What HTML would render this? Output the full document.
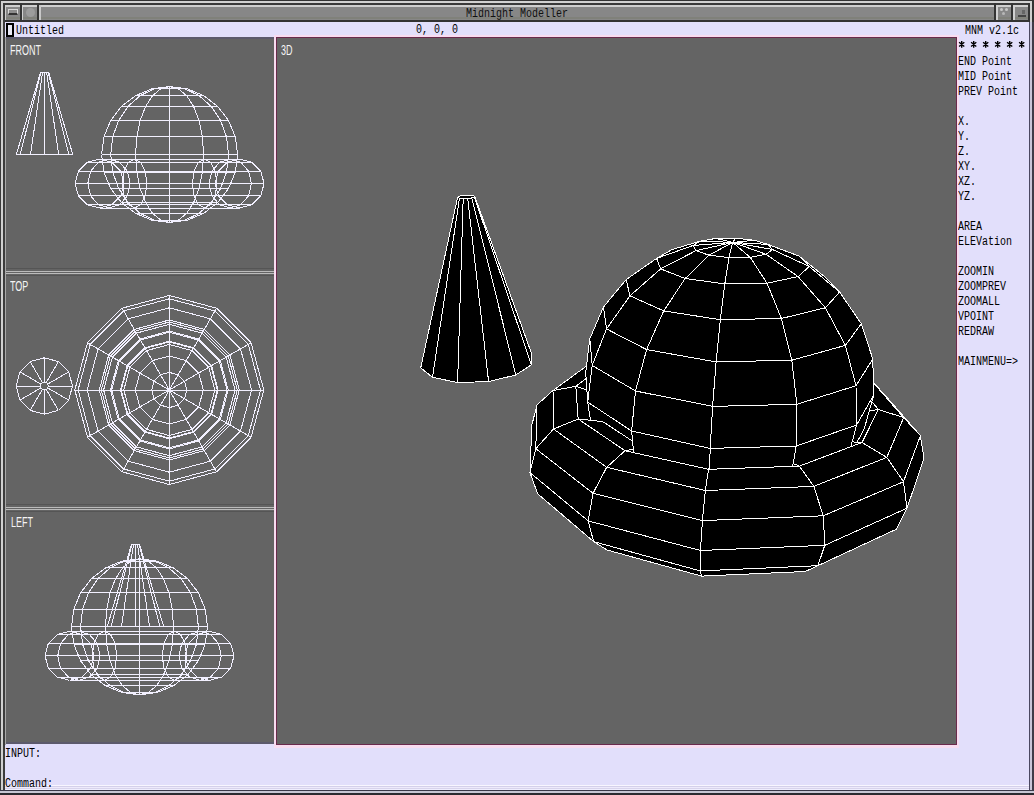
<!DOCTYPE html>
<html><head><meta charset="utf-8">
<style>
*{margin:0;padding:0;box-sizing:border-box}
html,body{width:1034px;height:795px;overflow:hidden;background:#e2dffb}
body{position:relative;font-family:"Liberation Mono",monospace}
.a{position:absolute}
.t{position:absolute;font-family:"Liberation Mono",monospace;font-size:12px;line-height:15px;color:#000;white-space:pre;transform:scaleX(0.8333);transform-origin:0 0}
.vl{position:absolute;font-family:"Liberation Sans",sans-serif;font-size:15px;line-height:15px;color:#f4f4f4;white-space:pre;transform:scaleX(0.6);transform-origin:0 0}
svg{position:absolute;overflow:hidden}
</style></head><body>
<!-- window frame -->
<div class="a" style="left:0;top:0;width:1034px;height:795px;background:#3a3a3a"></div>
<div class="a" style="left:1px;top:1px;width:1032px;height:793px;background:#d0d0d0"></div>
<div class="a" style="left:3px;top:3px;width:1029px;height:790px;background:#3c3c3c"></div>
<div class="a" style="left:5px;top:5px;width:1026px;height:787px;background:#b8b8b8"></div>
<!-- title bar -->
<div class="a" style="left:0;top:0;width:1034px;height:1px;background:#333"></div>
<div class="a" style="left:1px;top:1px;width:1032px;height:2px;background:#d2d2d2"></div>
<div class="a" style="left:3px;top:3px;width:1028px;height:2px;background:#3a3a3a"></div>
<div class="a" style="left:5px;top:5px;width:1024px;height:2px;background:#cfcfcf"></div>
<div class="a" style="left:5px;top:7px;width:1024px;height:13px;background:#878787"></div>
<div class="a" style="left:5px;top:17px;width:1024px;height:2px;background:#80817a"></div>
<div class="a" style="left:0;top:20px;width:1034px;height:2px;background:#333"></div>
<div class="a" style="left:20px;top:3px;width:2px;height:17px;background:#333"></div>
<div class="a" style="left:22px;top:5px;width:1px;height:15px;background:#d0d0d0"></div>
<div class="a" style="left:37px;top:3px;width:2px;height:17px;background:#333"></div>
<div class="a" style="left:39px;top:5px;width:2px;height:15px;background:#c8c8c8"></div>
<div class="a" style="left:994px;top:3px;width:2px;height:17px;background:#333"></div>
<div class="a" style="left:996px;top:5px;width:2px;height:15px;background:#d0d0d0"></div>
<div class="a" style="left:1011px;top:3px;width:2px;height:17px;background:#333"></div>
<div class="a" style="left:1013px;top:5px;width:2px;height:15px;background:#d0d0d0"></div>
<div class="a" style="left:1028px;top:3px;width:2px;height:17px;background:#333"></div>
<div class="a" style="left:1030px;top:1px;width:2px;height:21px;background:#d0d0d0"></div>
<div class="a" style="left:1032px;top:0;width:2px;height:22px;background:#333"></div>
<div class="a" style="left:1px;top:1px;width:2px;height:21px;background:#d0d0d0"></div>
<div class="a" style="left:3px;top:3px;width:2px;height:19px;background:#3a3a3a"></div>
<div class="a" style="left:5px;top:5px;width:1px;height:15px;background:#cfcfcf"></div>
<div class="a" style="left:8px;top:9px;width:10px;height:6px;border:1px solid #d8d8d8;border-bottom:2px solid #333;background:#8c8c8c"></div>
<div class="a" style="left:26px;top:8px;width:9px;height:9px;border-radius:5px;background:#9c9c9c"></div>
<div class="a" style="left:1000px;top:8px;width:3px;height:3px;border-radius:2px;background:#c8c8c8"></div>
<div class="a" style="left:1005px;top:8px;width:3px;height:3px;border-radius:2px;background:#c8c8c8"></div>
<div class="a" style="left:1002px;top:12px;width:3px;height:3px;border-radius:2px;background:#b8b8b8"></div>
<div class="a" style="left:1018px;top:15px;width:8px;height:2px;background:#444"></div>
<div class="a" style="left:1022px;top:10px;width:3px;height:4px;background:#666"></div>
<div class="t" style="left:466px;top:7px;color:#111">Midnight Modeller</div>
<!-- lavender client area -->
<div class="a" style="left:5px;top:22px;width:1024px;height:768px;background:#e2dffb"></div>
<div class="a" style="left:1029px;top:22px;width:1px;height:768px;background:#4a4860"></div>
<div class="a" style="left:1030px;top:22px;width:2px;height:768px;background:#c8c5d8"></div>
<div class="a" style="left:1032px;top:22px;width:2px;height:773px;background:#3e3b48"></div>
<div class="a" style="left:5px;top:785px;width:1024px;height:1px;background:#f8f6ff"></div>
<div class="a" style="left:5px;top:786px;width:1024px;height:1px;background:#d4d0ea"></div>
<div class="a" style="left:5px;top:787px;width:1024px;height:1px;background:#eeeafc"></div>
<div class="a" style="left:5px;top:788px;width:1024px;height:1px;background:#d8d4ec"></div>
<div class="a" style="left:5px;top:789px;width:1024px;height:1px;background:#f0eeff"></div>
<div class="a" style="left:0;top:790px;width:1034px;height:1px;background:#3a3848"></div>
<div class="a" style="left:0;top:791px;width:1034px;height:2px;background:#c8c6d4"></div>
<div class="a" style="left:0;top:793px;width:1034px;height:2px;background:#2c2a30"></div>
<!-- top info line -->
<div class="a" style="left:6px;top:23px;width:8px;height:14px;border:2px solid #000;background:#e8e8f4"></div>
<div class="t" style="left:16px;top:24px">Untitled</div>
<div class="t" style="left:416px;top:23px">0, 0, 0</div>
<!-- left viewports -->
<div class="a" style="left:5px;top:37px;width:269px;height:707px;background:#646464"></div>
<div class="a" style="left:5px;top:37px;width:1px;height:708px;background:#a8a8a8"></div>
<div class="a" style="left:6px;top:37px;width:268px;height:2px;background:#5c5a6c"></div>
<div class="a" style="left:6px;top:742px;width:268px;height:2px;background:#5c5a6c"></div>
<div class="a" style="left:6px;top:268px;width:268px;height:1px;background:#555"></div>
<div class="a" style="left:6px;top:271px;width:268px;height:1px;background:#bbb"></div>
<div class="a" style="left:6px;top:273px;width:268px;height:1px;background:#bbb"></div>
<div class="a" style="left:6px;top:275px;width:268px;height:1px;background:#555"></div>
<div class="a" style="left:6px;top:504px;width:268px;height:1px;background:#555"></div>
<div class="a" style="left:6px;top:507px;width:268px;height:1px;background:#bbb"></div>
<div class="a" style="left:6px;top:509px;width:268px;height:1px;background:#bbb"></div>
<div class="a" style="left:6px;top:511px;width:268px;height:1px;background:#555"></div>
<svg style="left:6px;top:38px" width="268" height="230"><g stroke="#f2f0ff" stroke-width="1" fill="none" shape-rendering="crispEdges"><path d="M181.2 50.8L178.8 50.8M178.8 50.8L163.6 48.5M163.6 48.5L181.2 50.8M178.8 50.8L172.4 50.8M172.4 50.8L163.6 48.5M172.4 50.8L163.6 50.8M163.6 50.8L163.6 48.5M163.6 50.8L154.8 50.8M154.8 50.8L163.6 48.5M154.8 50.8L148.4 50.8M148.4 50.8L163.6 48.5M148.4 50.8L146 50.8M146 50.8L163.6 48.5M197.6 57.6L193 57.6M193 57.6L178.8 50.8M181.2 50.8L197.6 57.6M193 57.6L180.6 57.6M180.6 57.6L172.4 50.8M180.6 57.6L163.6 57.6M163.6 57.6L163.6 50.8M163.6 57.6L146.6 57.6M146.6 57.6L154.8 50.8M146.6 57.6L134.2 57.6M134.2 57.6L148.4 50.8M134.2 57.6L129.6 57.6M129.6 57.6L146 50.8M211.7 68.4L205.2 68.4M205.2 68.4L193 57.6M197.6 57.6L211.7 68.4M205.2 68.4L187.6 68.4M187.6 68.4L180.6 57.6M187.6 68.4L163.6 68.4M163.6 68.4L163.6 57.6M163.6 68.4L139.6 68.4M139.6 68.4L146.6 57.6M139.6 68.4L122 68.4M122 68.4L134.2 57.6M122 68.4L115.5 68.4M115.5 68.4L129.6 57.6M222.5 82.5L214.6 82.5M214.6 82.5L205.2 68.4M211.7 68.4L222.5 82.5M214.6 82.5L193 82.5M193 82.5L187.6 68.4M193 82.5L163.6 82.5M163.6 82.5L163.6 68.4M163.6 82.5L134.2 82.5M134.2 82.5L139.6 68.4M134.2 82.5L112.6 82.5M112.6 82.5L122 68.4M112.6 82.5L104.7 82.5M104.7 82.5L115.5 68.4M229.3 98.9L220.5 98.9M220.5 98.9L214.6 82.5M222.5 82.5L229.3 98.9M220.5 98.9L196.4 98.9M196.4 98.9L193 82.5M196.4 98.9L163.6 98.9M163.6 98.9L163.6 82.5M163.6 98.9L130.8 98.9M130.8 98.9L134.2 82.5M130.8 98.9L106.7 98.9M106.7 98.9L112.6 82.5M106.7 98.9L97.9 98.9M97.9 98.9L104.7 82.5M231.6 116.5L222.5 116.5M222.5 116.5L220.5 98.9M229.3 98.9L231.6 116.5M222.5 116.5L197.6 116.5M197.6 116.5L196.4 98.9M197.6 116.5L163.6 116.5M163.6 116.5L163.6 98.9M163.6 116.5L129.6 116.5M129.6 116.5L130.8 98.9M129.6 116.5L104.7 116.5M104.7 116.5L106.7 98.9M104.7 116.5L95.6 116.5M95.6 116.5L97.9 98.9M229.3 134.1L220.5 134.1M220.5 134.1L222.5 116.5M231.6 116.5L229.3 134.1M220.5 134.1L196.4 134.1M196.4 134.1L197.6 116.5M196.4 134.1L163.6 134.1M163.6 134.1L163.6 116.5M163.6 134.1L130.8 134.1M130.8 134.1L129.6 116.5M130.8 134.1L106.7 134.1M106.7 134.1L104.7 116.5M106.7 134.1L97.9 134.1M97.9 134.1L95.6 116.5M222.5 150.5L214.6 150.5M214.6 150.5L220.5 134.1M229.3 134.1L222.5 150.5M214.6 150.5L193 150.5M193 150.5L196.4 134.1M193 150.5L163.6 150.5M163.6 150.5L163.6 134.1M163.6 150.5L134.2 150.5M134.2 150.5L130.8 134.1M134.2 150.5L112.6 150.5M112.6 150.5L106.7 134.1M112.6 150.5L104.7 150.5M104.7 150.5L97.9 134.1M211.7 164.6L205.2 164.6M205.2 164.6L214.6 150.5M222.5 150.5L211.7 164.6M205.2 164.6L187.6 164.6M187.6 164.6L193 150.5M187.6 164.6L163.6 164.6M163.6 164.6L163.6 150.5M163.6 164.6L139.6 164.6M139.6 164.6L134.2 150.5M139.6 164.6L122 164.6M122 164.6L112.6 150.5M122 164.6L115.5 164.6M115.5 164.6L104.7 150.5M197.6 175.4L193 175.4M193 175.4L205.2 164.6M211.7 164.6L197.6 175.4M193 175.4L180.6 175.4M180.6 175.4L187.6 164.6M180.6 175.4L163.6 175.4M163.6 175.4L163.6 164.6M163.6 175.4L146.6 175.4M146.6 175.4L139.6 164.6M146.6 175.4L134.2 175.4M134.2 175.4L122 164.6M134.2 175.4L129.6 175.4M129.6 175.4L115.5 164.6M181.2 182.2L178.8 182.2M178.8 182.2L193 175.4M197.6 175.4L181.2 182.2M178.8 182.2L172.4 182.2M172.4 182.2L180.6 175.4M172.4 182.2L163.6 182.2M163.6 182.2L163.6 175.4M163.6 182.2L154.8 182.2M154.8 182.2L146.6 175.4M154.8 182.2L148.4 182.2M148.4 182.2L134.2 175.4M148.4 182.2L146 182.2M146 182.2L129.6 175.4M163.6 184.5L178.8 182.2M181.2 182.2L163.6 184.5M163.6 184.5L172.4 182.2M163.6 184.5L163.6 182.2M163.6 184.5L154.8 182.2M163.6 184.5L148.4 182.2M163.6 184.5L146 182.2M245.4 145.5L242.6 133.2M242.6 133.2L254.8 133.2M254.8 133.2L258.1 145.5M258.1 145.5L245.4 145.5M242.6 133.2L234.8 124.3M234.8 124.3L245.8 124.3M245.8 124.3L254.8 133.2M234.8 124.3L224.2 121M224.2 121L233.6 121M233.6 121L245.8 124.3M224.2 121L213.6 124.3M213.6 124.3L221.4 124.3M221.4 124.3L233.6 121M213.6 124.3L205.8 133.2M205.8 133.2L212.4 133.2M212.4 133.2L221.4 124.3M205.8 133.2L203 145.5M203 145.5L209.1 145.5M209.1 145.5L212.4 133.2M203 145.5L205.8 157.8M205.8 157.8L212.4 157.8M212.4 157.8L209.1 145.5M205.8 157.8L213.6 166.7M213.6 166.7L221.3 166.7M221.3 166.7L212.4 157.8M213.6 166.7L224.2 170M224.2 170L233.6 170M233.6 170L221.3 166.7M224.2 170L234.8 166.7M234.8 166.7L245.8 166.7M245.8 166.7L233.6 170M234.8 166.7L242.6 157.8M242.6 157.8L254.8 157.8M254.8 157.8L245.8 166.7M242.6 157.8L245.4 145.5M258.1 145.5L254.8 157.8M210.8 145.5L209.2 133.2M209.2 133.2L242.6 133.2M245.4 145.5L210.8 145.5M209.2 133.2L204.7 124.3M204.7 124.3L234.8 124.3M204.7 124.3L198.6 121M198.6 121L224.2 121M198.6 121L192.5 124.3M192.5 124.3L213.6 124.3M192.5 124.3L188 133.2M188 133.2L205.8 133.2M188 133.2L186.4 145.5M186.4 145.5L203 145.5M186.4 145.5L188 157.8M188 157.8L205.8 157.8M188 157.8L192.5 166.7M192.5 166.7L213.6 166.7M192.5 166.7L198.6 170M198.6 170L224.2 170M198.6 170L204.7 166.7M204.7 166.7L234.8 166.7M204.7 166.7L209.2 157.8M209.2 157.8L242.6 157.8M209.2 157.8L210.8 145.5M163.6 145.5L163.6 133.2M163.6 133.2L209.2 133.2M210.8 145.5L163.6 145.5M163.6 133.2L163.6 124.3M163.6 124.3L204.7 124.3M163.6 124.3L163.6 121M163.6 121L198.6 121M163.6 124.3L192.5 124.3M163.6 133.2L188 133.2M163.6 145.5L186.4 145.5M163.6 145.5L163.6 157.8M163.6 157.8L188 157.8M163.6 157.8L163.6 166.7M163.6 166.7L192.5 166.7M163.6 166.7L163.6 170M163.6 170L198.6 170M163.6 166.7L204.7 166.7M163.6 157.8L209.2 157.8M116.4 145.5L118 133.2M118 133.2L163.6 133.2M163.6 145.5L116.4 145.5M118 133.2L122.5 124.3M122.5 124.3L163.6 124.3M122.5 124.3L128.6 121M128.6 121L163.6 121M128.6 121L134.7 124.3M134.7 124.3L163.6 124.3M134.7 124.3L139.2 133.2M139.2 133.2L163.6 133.2M139.2 133.2L140.8 145.5M140.8 145.5L163.6 145.5M140.8 145.5L139.2 157.8M139.2 157.8L163.6 157.8M139.2 157.8L134.7 166.7M134.7 166.7L163.6 166.7M134.7 166.7L128.6 170M128.6 170L163.6 170M128.6 170L122.5 166.7M122.5 166.7L163.6 166.7M122.5 166.7L118 157.8M118 157.8L163.6 157.8M118 157.8L116.4 145.5M81.8 145.5L84.6 133.2M84.6 133.2L118 133.2M116.4 145.5L81.8 145.5M84.6 133.2L92.4 124.3M92.4 124.3L122.5 124.3M92.4 124.3L103 121M103 121L128.6 121M103 121L113.6 124.3M113.6 124.3L134.7 124.3M113.6 124.3L121.4 133.2M121.4 133.2L139.2 133.2M121.4 133.2L124.2 145.5M124.2 145.5L140.8 145.5M124.2 145.5L121.4 157.8M121.4 157.8L139.2 157.8M121.4 157.8L113.6 166.7M113.6 166.7L134.7 166.7M113.6 166.7L103 170M103 170L128.6 170M103 170L92.4 166.7M92.4 166.7L122.5 166.7M92.4 166.7L84.6 157.8M84.6 157.8L118 157.8M84.6 157.8L81.8 145.5M69.1 145.5L72.4 133.2M72.4 133.2L84.6 133.2M81.8 145.5L69.1 145.5M72.4 133.2L81.4 124.3M81.4 124.3L92.4 124.3M81.4 124.3L93.6 121M93.6 121L103 121M93.6 121L105.8 124.3M105.8 124.3L113.6 124.3M105.8 124.3L114.8 133.2M114.8 133.2L121.4 133.2M114.8 133.2L118.1 145.5M118.1 145.5L124.2 145.5M118.1 145.5L114.8 157.8M114.8 157.8L121.4 157.8M114.8 157.8L105.8 166.7M105.8 166.7L113.6 166.7M105.8 166.7L93.6 170M93.6 170L103 170M93.6 170L81.4 166.7M81.4 166.7L92.4 166.7M81.4 166.7L72.4 157.8M72.4 157.8L84.6 157.8M72.4 157.8L69.1 145.5M116.3 145.5L118 133.2M81.8 145.5L116.3 145.5M118 157.8L116.3 145.5M116.3 145.5L163.6 145.5M66.8 116.5L63 116.5M63 116.5L42.1 34M42.1 34L42.6 34M42.6 34L66.8 116.5M63 116.5L52.7 116.5M52.7 116.5L40.6 34M40.6 34L42.1 34M52.7 116.5L38.6 116.5M38.6 116.5L38.6 34M38.6 34L40.6 34M38.6 116.5L24.5 116.5M24.5 116.5L36.6 34M36.6 34L38.6 34M24.5 116.5L14.2 116.5M14.2 116.5L35.1 34M35.1 34L36.6 34M14.2 116.5L10.4 116.5M10.4 116.5L34.6 34M34.6 34L35.1 34"/></g></svg>
<svg style="left:6px;top:276px" width="268" height="228"><g stroke="#f2f0ff" stroke-width="1" fill="none" shape-rendering="crispEdges"><path d="M180.9 114L178.5 105.2M178.5 105.2L163.3 114M163.3 114L180.9 114M178.5 105.2L172.1 98.8M172.1 98.8L163.3 114M172.1 98.8L163.3 96.4M163.3 96.4L163.3 114M163.3 96.4L154.5 98.8M154.5 98.8L163.3 114M154.5 98.8L148.1 105.2M148.1 105.2L163.3 114M148.1 105.2L145.7 114M145.7 114L163.3 114M145.7 114L148.1 122.8M148.1 122.8L163.3 114M148.1 122.8L154.5 129.2M154.5 129.2L163.3 114M154.5 129.2L163.3 131.6M163.3 131.6L163.3 114M163.3 131.6L172.1 129.2M172.1 129.2L163.3 114M172.1 129.2L178.5 122.8M178.5 122.8L163.3 114M178.5 122.8L180.9 114M197.3 114L192.7 97M192.7 97L178.5 105.2M180.9 114L197.3 114M192.7 97L180.3 84.6M180.3 84.6L172.1 98.8M180.3 84.6L163.3 80M163.3 80L163.3 96.4M163.3 80L146.3 84.6M146.3 84.6L154.5 98.8M146.3 84.6L133.9 97M133.9 97L148.1 105.2M133.9 97L129.3 114M129.3 114L145.7 114M129.3 114L133.9 131M133.9 131L148.1 122.8M133.9 131L146.3 143.4M146.3 143.4L154.5 129.2M146.3 143.4L163.3 148M163.3 148L163.3 131.6M163.3 148L180.3 143.4M180.3 143.4L172.1 129.2M180.3 143.4L192.7 131M192.7 131L178.5 122.8M192.7 131L197.3 114M211.4 114L204.9 90M204.9 90L192.7 97M197.3 114L211.4 114M204.9 90L187.3 72.4M187.3 72.4L180.3 84.6M187.3 72.4L163.3 65.9M163.3 65.9L163.3 80M163.3 65.9L139.3 72.4M139.3 72.4L146.3 84.6M139.3 72.4L121.7 90M121.7 90L133.9 97M121.7 90L115.2 114M115.2 114L129.3 114M115.2 114L121.7 138M121.7 138L133.9 131M121.7 138L139.3 155.6M139.3 155.6L146.3 143.4M139.3 155.6L163.3 162.1M163.3 162.1L163.3 148M163.3 162.1L187.3 155.6M187.3 155.6L180.3 143.4M187.3 155.6L204.9 138M204.9 138L192.7 131M204.9 138L211.4 114M222.2 114L214.3 84.6M214.3 84.6L204.9 90M211.4 114L222.2 114M214.3 84.6L192.7 63M192.7 63L187.3 72.4M192.7 63L163.3 55.1M163.3 55.1L163.3 65.9M163.3 55.1L133.9 63M133.9 63L139.3 72.4M133.9 63L112.3 84.6M112.3 84.6L121.7 90M112.3 84.6L104.4 114M104.4 114L115.2 114M104.4 114L112.3 143.4M112.3 143.4L121.7 138M112.3 143.4L133.9 165M133.9 165L139.3 155.6M133.9 165L163.3 172.9M163.3 172.9L163.3 162.1M163.3 172.9L192.7 165M192.7 165L187.3 155.6M192.7 165L214.3 143.4M214.3 143.4L204.9 138M214.3 143.4L222.2 114M229 114L220.2 81.2M220.2 81.2L214.3 84.6M222.2 114L229 114M220.2 81.2L196.1 57.1M196.1 57.1L192.7 63M196.1 57.1L163.3 48.3M163.3 48.3L163.3 55.1M163.3 48.3L130.5 57.1M130.5 57.1L133.9 63M130.5 57.1L106.4 81.2M106.4 81.2L112.3 84.6M106.4 81.2L97.6 114M97.6 114L104.4 114M97.6 114L106.4 146.8M106.4 146.8L112.3 143.4M106.4 146.8L130.5 170.9M130.5 170.9L133.9 165M130.5 170.9L163.3 179.7M163.3 179.7L163.3 172.9M163.3 179.7L196.1 170.9M196.1 170.9L192.7 165M196.1 170.9L220.2 146.8M220.2 146.8L214.3 143.4M220.2 146.8L229 114M231.3 114L222.2 80M222.2 80L220.2 81.2M229 114L231.3 114M222.2 80L197.3 55.1M197.3 55.1L196.1 57.1M197.3 55.1L163.3 46M163.3 46L163.3 48.3M163.3 46L129.3 55.1M129.3 55.1L130.5 57.1M129.3 55.1L104.4 80M104.4 80L106.4 81.2M104.4 80L95.3 114M95.3 114L97.6 114M95.3 114L104.4 148M104.4 148L106.4 146.8M104.4 148L129.3 172.9M129.3 172.9L130.5 170.9M129.3 172.9L163.3 182M163.3 182L163.3 179.7M163.3 182L197.3 172.9M197.3 172.9L196.1 170.9M197.3 172.9L222.2 148M222.2 148L220.2 146.8M222.2 148L231.3 114M245.1 66.8L242.3 68.4M242.3 68.4L254.5 114M254.5 114L257.8 114M257.8 114L245.1 66.8M242.3 68.4L234.5 72.9M234.5 72.9L245.6 114M245.6 114L254.5 114M234.5 72.9L223.9 79M223.9 79L233.3 114M233.3 114L245.6 114M223.9 79L213.3 85.1M213.3 85.1L221 114M221 114L233.3 114M213.3 85.1L205.5 89.6M205.5 89.6L212.1 114M212.1 114L221 114M205.5 89.6L202.7 91.2M202.7 91.2L208.8 114M208.8 114L212.1 114M210.6 32.2L208.9 35M208.9 35L242.3 68.4M245.1 66.8L210.6 32.2M208.9 35L204.4 42.8M204.4 42.8L234.5 72.9M204.4 42.8L198.3 53.4M198.3 53.4L223.9 79M198.3 53.4L192.2 64M192.2 64L213.3 85.1M192.2 64L187.7 71.8M187.7 71.8L205.5 89.6M187.7 71.8L186 74.6M186 74.6L202.7 91.2M163.3 19.5L163.3 22.8M163.3 22.8L208.9 35M210.6 32.2L163.3 19.5M163.3 22.8L163.3 31.8M163.3 31.8L204.4 42.8M163.3 31.8L163.3 44M163.3 44L198.3 53.4M163.3 44L163.3 56.2M163.3 56.2L192.2 64M163.3 56.2L163.3 65.2M163.3 65.2L187.7 71.8M163.3 65.2L163.3 68.5M163.3 68.5L186 74.6M116.1 32.2L117.7 35M117.7 35L163.3 22.8M163.3 19.5L116.1 32.2M117.7 35L122.2 42.8M122.2 42.8L163.3 31.8M122.2 42.8L128.3 53.4M128.3 53.4L163.3 44M128.3 53.4L134.4 64M134.4 64L163.3 56.2M134.4 64L138.9 71.8M138.9 71.8L163.3 65.2M138.9 71.8L140.6 74.6M140.6 74.6L163.3 68.5M81.5 66.8L84.3 68.4M84.3 68.4L117.7 35M116.1 32.2L81.5 66.8M84.3 68.4L92.1 72.9M92.1 72.9L122.2 42.8M92.1 72.9L102.7 79M102.7 79L128.3 53.4M102.7 79L113.3 85.1M113.3 85.1L134.4 64M113.3 85.1L121.1 89.6M121.1 89.6L138.9 71.8M121.1 89.6L123.9 91.2M123.9 91.2L140.6 74.6M68.8 114L72.1 114M72.1 114L84.3 68.4M81.5 66.8L68.8 114M72.1 114L81.1 114M81.1 114L92.1 72.9M81.1 114L93.3 114M93.3 114L102.7 79M93.3 114L105.6 114M105.6 114L113.3 85.1M105.6 114L114.5 114M114.5 114L121.1 89.6M114.5 114L117.8 114M117.8 114L123.9 91.2M81.5 161.2L84.3 159.6M84.3 159.6L72.1 114M68.8 114L81.5 161.2M84.3 159.6L92.1 155.1M92.1 155.1L81.1 114M92.1 155.1L102.7 149M102.7 149L93.3 114M102.7 149L113.3 142.9M113.3 142.9L105.6 114M113.3 142.9L121.1 138.4M121.1 138.4L114.5 114M121.1 138.4L123.9 136.8M123.9 136.8L117.8 114M116 195.8L117.7 193M117.7 193L84.3 159.6M81.5 161.2L116 195.8M117.7 193L122.2 185.2M122.2 185.2L92.1 155.1M122.2 185.2L128.3 174.6M128.3 174.6L102.7 149M128.3 174.6L134.4 164M134.4 164L113.3 142.9M134.4 164L138.9 156.2M138.9 156.2L121.1 138.4M138.9 156.2L140.5 153.4M140.5 153.4L123.9 136.8M163.3 208.5L163.3 205.2M163.3 205.2L117.7 193M116 195.8L163.3 208.5M163.3 205.2L163.3 196.2M163.3 196.2L122.2 185.2M163.3 196.2L163.3 184M163.3 184L128.3 174.6M163.3 184L163.3 171.8M163.3 171.8L134.4 164M163.3 171.8L163.3 162.8M163.3 162.8L138.9 156.2M163.3 162.8L163.3 159.5M163.3 159.5L140.5 153.4M210.6 195.8L208.9 193M208.9 193L163.3 205.2M163.3 208.5L210.6 195.8M208.9 193L204.4 185.2M204.4 185.2L163.3 196.2M204.4 185.2L198.3 174.6M198.3 174.6L163.3 184M198.3 174.6L192.2 164M192.2 164L163.3 171.8M192.2 164L187.7 156.2M187.7 156.2L163.3 162.8M187.7 156.2L186 153.4M186 153.4L163.3 159.5M245.1 161.3L242.3 159.6M242.3 159.6L208.9 193M210.6 195.8L245.1 161.3M242.3 159.6L234.5 155.1M234.5 155.1L204.4 185.2M234.5 155.1L223.9 149M223.9 149L198.3 174.6M223.9 149L213.3 142.9M213.3 142.9L192.2 164M213.3 142.9L205.5 138.4M205.5 138.4L187.7 156.2M205.5 138.4L202.7 136.8M202.7 136.8L186 153.4M254.5 114L242.3 159.6M245.1 161.3L257.8 114M245.6 114L234.5 155.1M233.3 114L223.9 149M221 114L213.3 142.9M212.1 114L205.5 138.4M208.8 114L202.7 136.8M66.5 110L62.7 95.9M62.7 95.9L41.8 108M41.8 108L42.3 110M42.3 110L66.5 110M62.7 95.9L52.4 85.6M52.4 85.6L40.3 106.5M40.3 106.5L41.8 108M52.4 85.6L38.3 81.8M38.3 81.8L38.3 106M38.3 106L40.3 106.5M38.3 81.8L24.2 85.6M24.2 85.6L36.3 106.5M36.3 106.5L38.3 106M24.2 85.6L13.9 95.9M13.9 95.9L34.8 108M34.8 108L36.3 106.5M13.9 95.9L10.1 110M10.1 110L34.3 110M34.3 110L34.8 108M10.1 110L13.9 124.1M13.9 124.1L34.8 112M34.8 112L34.3 110M13.9 124.1L24.2 134.4M24.2 134.4L36.3 113.5M36.3 113.5L34.8 112M24.2 134.4L38.3 138.2M38.3 138.2L38.3 114M38.3 114L36.3 113.5M38.3 138.2L52.4 134.4M52.4 134.4L40.3 113.5M40.3 113.5L38.3 114M52.4 134.4L62.7 124.1M62.7 124.1L41.8 112M41.8 112L40.3 113.5M62.7 124.1L66.5 110M42.3 110L41.8 112"/></g></svg>
<svg style="left:6px;top:510px" width="268" height="234"><g stroke="#f2f0ff" stroke-width="1" fill="none" shape-rendering="crispEdges"><path d="M133.5 51.1L124.7 51.1M124.7 51.1L133.5 48.8M133.5 48.8L133.5 51.1M124.7 51.1L118.3 51.1M118.3 51.1L133.5 48.8M118.3 51.1L115.9 51.1M115.9 51.1L133.5 48.8M133.5 51.1L142.3 51.1M142.3 51.1L133.5 48.8M142.3 51.1L148.7 51.1M148.7 51.1L133.5 48.8M148.7 51.1L151.1 51.1M151.1 51.1L133.5 48.8M133.5 57.9L116.5 57.9M116.5 57.9L124.7 51.1M133.5 51.1L133.5 57.9M116.5 57.9L104.1 57.9M104.1 57.9L118.3 51.1M104.1 57.9L99.5 57.9M99.5 57.9L115.9 51.1M133.5 57.9L150.5 57.9M150.5 57.9L142.3 51.1M150.5 57.9L162.9 57.9M162.9 57.9L148.7 51.1M162.9 57.9L167.5 57.9M167.5 57.9L151.1 51.1M133.5 68.7L109.5 68.7M109.5 68.7L116.5 57.9M133.5 57.9L133.5 68.7M109.5 68.7L91.9 68.7M91.9 68.7L104.1 57.9M91.9 68.7L85.4 68.7M85.4 68.7L99.5 57.9M133.5 68.7L157.5 68.7M157.5 68.7L150.5 57.9M157.5 68.7L175.1 68.7M175.1 68.7L162.9 57.9M175.1 68.7L181.6 68.7M181.6 68.7L167.5 57.9M133.5 82.8L104.1 82.8M104.1 82.8L109.5 68.7M133.5 68.7L133.5 82.8M104.1 82.8L82.5 82.8M82.5 82.8L91.9 68.7M82.5 82.8L74.6 82.8M74.6 82.8L85.4 68.7M133.5 82.8L162.9 82.8M162.9 82.8L157.5 68.7M162.9 82.8L184.5 82.8M184.5 82.8L175.1 68.7M184.5 82.8L192.4 82.8M192.4 82.8L181.6 68.7M133.5 99.2L100.7 99.2M100.7 99.2L104.1 82.8M133.5 82.8L133.5 99.2M100.7 99.2L76.6 99.2M76.6 99.2L82.5 82.8M76.6 99.2L67.8 99.2M67.8 99.2L74.6 82.8M133.5 99.2L166.3 99.2M166.3 99.2L162.9 82.8M166.3 99.2L190.4 99.2M190.4 99.2L184.5 82.8M190.4 99.2L199.2 99.2M199.2 99.2L192.4 82.8M133.5 116.8L99.5 116.8M99.5 116.8L100.7 99.2M133.5 99.2L133.5 116.8M99.5 116.8L74.6 116.8M74.6 116.8L76.6 99.2M74.6 116.8L65.5 116.8M65.5 116.8L67.8 99.2M133.5 116.8L167.5 116.8M167.5 116.8L166.3 99.2M167.5 116.8L192.4 116.8M192.4 116.8L190.4 99.2M192.4 116.8L201.5 116.8M201.5 116.8L199.2 99.2M133.5 134.4L100.7 134.4M100.7 134.4L99.5 116.8M133.5 116.8L133.5 134.4M100.7 134.4L76.6 134.4M76.6 134.4L74.6 116.8M76.6 134.4L67.8 134.4M67.8 134.4L65.5 116.8M133.5 134.4L166.3 134.4M166.3 134.4L167.5 116.8M166.3 134.4L190.4 134.4M190.4 134.4L192.4 116.8M190.4 134.4L199.2 134.4M199.2 134.4L201.5 116.8M133.5 150.8L104.1 150.8M104.1 150.8L100.7 134.4M133.5 134.4L133.5 150.8M104.1 150.8L82.5 150.8M82.5 150.8L76.6 134.4M82.5 150.8L74.6 150.8M74.6 150.8L67.8 134.4M133.5 150.8L162.9 150.8M162.9 150.8L166.3 134.4M162.9 150.8L184.5 150.8M184.5 150.8L190.4 134.4M184.5 150.8L192.4 150.8M192.4 150.8L199.2 134.4M133.5 164.9L109.5 164.9M109.5 164.9L104.1 150.8M133.5 150.8L133.5 164.9M109.5 164.9L91.9 164.9M91.9 164.9L82.5 150.8M91.9 164.9L85.4 164.9M85.4 164.9L74.6 150.8M133.5 164.9L157.5 164.9M157.5 164.9L162.9 150.8M157.5 164.9L175.1 164.9M175.1 164.9L184.5 150.8M175.1 164.9L181.6 164.9M181.6 164.9L192.4 150.8M133.5 175.7L116.5 175.7M116.5 175.7L109.5 164.9M133.5 164.9L133.5 175.7M116.5 175.7L104.1 175.7M104.1 175.7L91.9 164.9M104.1 175.7L99.5 175.7M99.5 175.7L85.4 164.9M133.5 175.7L150.5 175.7M150.5 175.7L157.5 164.9M150.5 175.7L162.9 175.7M162.9 175.7L175.1 164.9M162.9 175.7L167.5 175.7M167.5 175.7L181.6 164.9M133.5 182.5L124.7 182.5M124.7 182.5L116.5 175.7M133.5 175.7L133.5 182.5M124.7 182.5L118.3 182.5M118.3 182.5L104.1 175.7M118.3 182.5L115.9 182.5M115.9 182.5L99.5 175.7M133.5 182.5L142.3 182.5M142.3 182.5L150.5 175.7M142.3 182.5L148.7 182.5M148.7 182.5L162.9 175.7M148.7 182.5L151.1 182.5M151.1 182.5L167.5 175.7M133.5 184.8L124.7 182.5M133.5 182.5L133.5 184.8M133.5 184.8L118.3 182.5M133.5 184.8L115.9 182.5M133.5 184.8L142.3 182.5M133.5 184.8L148.7 182.5M133.5 184.8L151.1 182.5M86.2 145.8L87.9 133.5M87.9 133.5L133.5 133.5M133.5 133.5L133.5 145.8M133.5 145.8L86.2 145.8M87.9 133.5L92.4 124.6M92.4 124.6L133.5 124.6M133.5 124.6L133.5 133.5M92.4 124.6L98.5 121.3M98.5 121.3L133.5 121.3M133.5 121.3L133.5 124.6M98.5 121.3L104.6 124.6M104.6 124.6L133.5 124.6M104.6 124.6L109.1 133.5M109.1 133.5L133.5 133.5M109.1 133.5L110.8 145.8M110.8 145.8L133.5 145.8M110.8 145.8L109.1 158M109.1 158L133.5 158M133.5 158L133.5 145.8M109.1 158L104.6 167M104.6 167L133.5 167M133.5 167L133.5 158M104.6 167L98.5 170.3M98.5 170.3L133.5 170.3M133.5 170.3L133.5 167M98.5 170.3L92.4 167M92.4 167L133.5 167M92.4 167L87.9 158M87.9 158L133.5 158M87.9 158L86.2 145.8M51.7 145.8L54.5 133.5M54.5 133.5L87.9 133.5M86.2 145.8L51.7 145.8M54.5 133.5L62.3 124.6M62.3 124.6L92.4 124.6M62.3 124.6L72.9 121.3M72.9 121.3L98.5 121.3M72.9 121.3L83.5 124.6M83.5 124.6L104.6 124.6M83.5 124.6L91.3 133.5M91.3 133.5L109.1 133.5M91.3 133.5L94.1 145.8M94.1 145.8L110.8 145.8M94.1 145.8L91.3 158M91.3 158L109.1 158M91.3 158L83.5 167M83.5 167L104.6 167M83.5 167L72.9 170.3M72.9 170.3L98.5 170.3M72.9 170.3L62.3 167M62.3 167L92.4 167M62.3 167L54.5 158M54.5 158L87.9 158M54.5 158L51.7 145.8M39 145.8L42.3 133.5M42.3 133.5L54.5 133.5M51.7 145.8L39 145.8M42.3 133.5L51.2 124.6M51.2 124.6L62.3 124.6M51.2 124.6L63.5 121.3M63.5 121.3L72.9 121.3M63.5 121.3L75.8 124.6M75.8 124.6L83.5 124.6M75.8 124.6L84.7 133.5M84.7 133.5L91.3 133.5M84.7 133.5L88 145.8M88 145.8L94.1 145.8M88 145.8L84.7 158M84.7 158L91.3 158M84.7 158L75.8 167M75.8 167L83.5 167M75.8 167L63.5 170.3M63.5 170.3L72.9 170.3M63.5 170.3L51.2 167M51.2 167L62.3 167M51.2 167L42.3 158M42.3 158L54.5 158M42.3 158L39 145.8M180.7 145.8L179.1 133.5M179.1 133.5L133.5 133.5M133.5 145.8L180.7 145.8M179.1 133.5L174.6 124.6M174.6 124.6L133.5 124.6M174.6 124.6L168.5 121.3M168.5 121.3L133.5 121.3M168.5 121.3L162.4 124.6M162.4 124.6L133.5 124.6M162.4 124.6L157.9 133.5M157.9 133.5L133.5 133.5M157.9 133.5L156.2 145.8M156.2 145.8L133.5 145.8M156.2 145.8L157.9 158M157.9 158L133.5 158M157.9 158L162.4 167M162.4 167L133.5 167M162.4 167L168.5 170.3M168.5 170.3L133.5 170.3M168.5 170.3L174.6 167M174.6 167L133.5 167M174.6 167L179.1 158M179.1 158L133.5 158M179.1 158L180.7 145.8M215.3 145.8L212.5 133.5M212.5 133.5L179.1 133.5M180.7 145.8L215.3 145.8M212.5 133.5L204.7 124.6M204.7 124.6L174.6 124.6M204.7 124.6L194.1 121.3M194.1 121.3L168.5 121.3M194.1 121.3L183.5 124.6M183.5 124.6L162.4 124.6M183.5 124.6L175.7 133.5M175.7 133.5L157.9 133.5M175.7 133.5L172.9 145.8M172.9 145.8L156.2 145.8M172.9 145.8L175.7 158M175.7 158L157.9 158M175.7 158L183.5 167M183.5 167L162.4 167M183.5 167L194.1 170.3M194.1 170.3L168.5 170.3M194.1 170.3L204.7 167M204.7 167L174.6 167M204.7 167L212.5 158M212.5 158L179.1 158M212.5 158L215.3 145.8M228 145.8L224.7 133.5M224.7 133.5L212.5 133.5M215.3 145.8L228 145.8M224.7 133.5L215.8 124.6M215.8 124.6L204.7 124.6M215.8 124.6L203.5 121.3M203.5 121.3L194.1 121.3M203.5 121.3L191.2 124.6M191.2 124.6L183.5 124.6M191.2 124.6L182.3 133.5M182.3 133.5L175.7 133.5M182.3 133.5L179 145.8M179 145.8L172.9 145.8M179 145.8L182.3 158M182.3 158L175.7 158M182.3 158L191.2 167M191.2 167L183.5 167M191.2 167L203.5 170.3M203.5 170.3L194.1 170.3M203.5 170.3L215.8 167M215.8 167L204.7 167M215.8 167L224.7 158M224.7 158L212.5 158M224.7 158L228 145.8M180.8 145.8L179.1 133.5M215.3 145.8L180.8 145.8M157.9 133.5L156.3 145.8M156.3 145.8L172.9 145.8M156.3 145.8L157.9 158M179.1 158L180.8 145.8M180.8 145.8L133.5 145.8M133.5 145.8L156.3 145.8M129.5 116.8L115.4 116.8M115.4 116.8L127.5 34.3M127.5 34.3L129.5 34.3M129.5 34.3L129.5 116.8M115.4 116.8L105.1 116.8M105.1 116.8L126 34.3M126 34.3L127.5 34.3M105.1 116.8L101.3 116.8M101.3 116.8L125.5 34.3M125.5 34.3L126 34.3M129.5 116.8L143.6 116.8M143.6 116.8L131.5 34.3M131.5 34.3L129.5 34.3M143.6 116.8L153.9 116.8M153.9 116.8L133 34.3M133 34.3L131.5 34.3M153.9 116.8L157.7 116.8M157.7 116.8L133.5 34.3M133.5 34.3L133 34.3"/></g></svg>
<div class="vl" style="left:10px;top:42px">FRONT</div>
<div class="vl" style="left:10px;top:278px">TOP</div>
<div class="vl" style="left:11px;top:514px">LEFT</div>
<!-- 3D viewport -->
<div class="a" style="left:274px;top:35px;width:685px;height:713px;background:#f8dcf0"></div>
<div class="a" style="left:276px;top:37px;width:681px;height:708px;background:#6a2a4c"></div>
<div class="a" style="left:277px;top:38px;width:679px;height:706px;background:#646464"></div>
<svg style="left:277px;top:38px" width="679" height="706"><g stroke="#fff" stroke-width="1" fill="#000" stroke-linejoin="round" shape-rendering="crispEdges"><path d="M380.9 307.3L388.8 309L455.9 307.3L457 305.3Z"/><path d="M457 305.3L455.9 307.3L522.3 318L532.7 317.4Z"/><path d="M401.4 381.5L395 389.1L450.5 387.3L450.1 380Z"/><path d="M450.1 380L450.5 387.3L504.9 398.2L497.8 389.3Z"/><path d="M388.8 309L396.8 321.7L454.1 320.1L455.9 307.3Z"/><path d="M455.9 307.3L454.1 320.1L510.6 329.6L522.3 318Z"/><path d="M404.3 364.3L401.4 381.5L450.1 380L450.7 362.8Z"/><path d="M316 323.3L332.3 323.2L388.8 309L380.9 307.3Z"/><path d="M361.3 393.8L348.9 403.5L395 389.1L401.4 381.5Z"/><path d="M450.7 362.8L450.1 380L497.8 389.3L496.2 371.4Z"/><path d="M396.8 321.7L402.6 342.1L452.2 340.7L454.1 320.1Z"/><path d="M497.8 389.3L504.9 398.2L547.4 420.6L534.4 408.4Z"/><path d="M402.6 342.1L404.3 364.3L450.7 362.8L452.2 340.7Z"/><path d="M454.1 320.1L452.2 340.7L500.9 349.3L510.6 329.6Z"/><path d="M532.7 317.4L522.3 318L575.7 340.3L594.9 343.1Z"/><path d="M452.2 340.7L450.7 362.8L496.2 371.4L500.9 349.3Z"/><path d="M332.3 323.2L349.2 334.2L396.8 321.7L388.8 309Z"/><path d="M366.1 375.5L361.3 393.8L401.4 381.5L404.3 364.3Z"/><path d="M496.2 371.4L497.8 389.3L534.4 408.4L531 388.8Z"/><path d="M522.3 318L510.6 329.6L554.9 349.1L575.7 340.3Z"/><path d="M349.2 334.2L361.7 353.5L402.6 342.1L396.8 321.7Z"/><path d="M361.7 353.5L366.1 375.5L404.3 364.3L402.6 342.1Z"/><path d="M500.9 349.3L496.2 371.4L531 388.8L538.4 367Z"/><path d="M510.6 329.6L500.9 349.3L538.4 367L554.9 349.1Z"/><path d="M345.3 394.9L339.2 415.2L361.3 393.8L366.1 375.5Z"/><path d="M276 352.5L298.8 348.4L332.3 323.2L316 323.3Z"/><path d="M607.2 356.2L594.9 343.1L626.7 379.6L643.4 397.7Z"/><path d="M531 388.8L534.4 408.4L549.8 433.9L545.4 411.9Z"/><path d="M339.1 373.2L345.3 394.9L366.1 375.5L361.7 353.5Z"/><path d="M298.8 348.4L322 356L349.2 334.2L332.3 323.2Z"/><path d="M322 356L339.1 373.2L361.7 353.5L349.2 334.2Z"/><path d="M594.9 343.1L575.7 340.3L601.4 371.5L626.7 379.6Z"/><path d="M538.4 367L531 388.8L545.4 411.9L554.4 390.5Z"/><path d="M575.7 340.3L554.9 349.1L574.8 375.6L601.4 371.5Z"/><path d="M554.9 349.1L538.4 367L554.4 390.5L574.8 375.6Z"/><path d="M254.4 326.8L254.8 316.2L197.7 158.2L197.4 159.1Z"/><path d="M143.7 329.9L155.5 339.3L182.5 160.1L180.6 159.3Z"/><path d="M238.8 337L254.4 326.8L197.4 159.1L194.8 159.9Z"/><path d="M197.4 159.1L197.7 158.2L195.8 157.5L192.1 157.1L187.7 157.2L183.6 157.7L181.1 158.5L180.6 159.3L182.5 160.1L186.2 160.4L190.7 160.4L194.8 159.9Z"/><path d="M343.3 397.5L349.5 418.7L345.3 394.9L339.1 373.2Z"/><path d="M155.5 339.3L180.6 344.5L186.2 160.4L182.5 160.1Z"/><path d="M253 434.6L258.8 410.7L260 366.8L254.8 387.2Z"/><path d="M211.6 343.6L238.8 337L194.8 159.9L190.7 160.4Z"/><path d="M180.6 344.5L211.6 343.6L190.7 160.4L186.2 160.4Z"/><path d="M325.7 383.6L343.3 397.5L339.1 373.2L322 356Z"/><path d="M258.8 410.7L276.5 391L276 352.5L260 366.8Z"/><path d="M301.2 381L325.7 383.6L322 356L298.8 348.4Z"/><path d="M276.5 391L301.2 381L298.8 348.4L276 352.5Z"/><path d="M647 420.5L643.4 397.7L626.5 443.7L630 470.2Z"/><path d="M574.8 375.6L554.4 390.5L540.4 414.3L559.6 403Z"/><path d="M400.7 480.9L435.6 490L433.4 486.1L382.4 473Z"/><path d="M562.6 254L547 238.2L522.1 218.1L532.2 228.5Z"/><path d="M435.6 490L473.1 488.7L488.6 484.3L433.4 486.1Z"/><path d="M308.7 334.4L310.7 364.1L315.2 327.4L312.8 300.8Z"/><path d="M351.9 450.1L382.4 473L367.6 455.2L330.3 427.6Z"/><path d="M643.4 397.7L626.7 379.6L609.8 419.4L626.5 443.7Z"/><path d="M601.4 371.5L574.8 375.6L559.6 403L585 404.5Z"/><path d="M458.5 200.1L439 200.4L455.7 204.4Z"/><path d="M477.4 202.3L458.5 200.1L455.7 204.4Z"/><path d="M570.4 421.9L587.2 391L596.7 357L579.6 387Z"/><path d="M394.9 211.6L379.6 220.4L416 207.5L423.5 203.1Z"/><path d="M626.7 379.6L601.4 371.5L585 404.5L609.8 419.4Z"/><path d="M439 200.4L423.5 203.1L455.7 204.4Z"/><path d="M491 206.4L477.4 202.3L455.7 204.4Z"/><path d="M532.2 228.5L522.1 218.1L491 206.4L495.5 211.5Z"/><path d="M488.6 484.3L529 468.3L552.9 449.5L502.5 469.1Z"/><path d="M312.8 300.8L315.2 327.4L329.5 290.9L326.4 269.1Z"/><path d="M423.5 203.1L416 207.5L455.7 204.4Z"/><path d="M579.6 387L596.7 357L595.8 321L579 347.7Z"/><path d="M495.5 211.5L491 206.4L455.7 204.4Z"/><path d="M326.4 269.1L329.5 290.9L353 257.8L349.1 241.6Z"/><path d="M330.3 427.6L367.6 455.2L357.9 428L316 398.3Z"/><path d="M416 207.5L418.9 212.7L455.7 204.4Z"/><path d="M349.1 241.6L353 257.8L383.6 230.9L379.6 220.4Z"/><path d="M579 347.7L595.8 321L584.3 285.7L568.4 307.4Z"/><path d="M379.6 220.4L383.6 230.9L418.9 212.7L416 207.5Z"/><path d="M382.4 473L433.4 486.1L432.1 471.4L367.6 455.2Z"/><path d="M489.1 216.3L495.5 211.5L455.7 204.4Z"/><path d="M433.4 486.1L488.6 484.3L502.5 469.1L432.1 471.4Z"/><path d="M568.4 307.4L584.3 285.7L562.6 254L548.4 269.8Z"/><path d="M521.1 238.6L532.2 228.5L495.5 211.5L489.1 216.3Z"/><path d="M502.5 469.1L552.9 449.5L570.4 421.9L513.1 443.2Z"/><path d="M418.9 212.7L432 217.2L455.7 204.4Z"/><path d="M548.4 269.8L562.6 254L532.2 228.5L521.1 238.6Z"/><path d="M473.2 219.3L489.1 216.3L455.7 204.4Z"/><path d="M316.6 503.6L311.2 482.9L253 434.6L260.6 455.7Z"/><path d="M432 217.2L452 219.6L455.7 204.4Z"/><path d="M316 398.3L357.9 428L354.6 393L310.7 364.1Z"/><path d="M348 412.7L365.5 409.6L325.7 383.6L301.2 381Z"/><path d="M452 219.6L473.2 219.3L455.7 204.4Z"/><path d="M383.6 230.9L408.2 240.5L432 217.2L418.9 212.7Z"/><path d="M311.2 482.9L316 455.3L258.8 410.7L253 434.6Z"/><path d="M585 404.5L559.6 403L507.6 422L522.4 428.1Z"/><path d="M329.7 429.3L348 412.7L301.2 381L276.5 391Z"/><path d="M490 245.2L521.1 238.6L489.1 216.3L473.2 219.3Z"/><path d="M513.1 443.2L570.4 421.9L579.6 387L519.2 408Z"/><path d="M619.6 491.1L630 470.2L547.8 507.3L540.9 527.7Z"/><path d="M367.6 455.2L432.1 471.4L432 445.7L357.9 428Z"/><path d="M310.7 364.1L354.6 393L358.5 353L315.2 327.4Z"/><path d="M316 455.3L329.7 429.3L276.5 391L258.8 410.7Z"/><path d="M432.1 471.4L502.5 469.1L513.1 443.2L432 445.7Z"/><path d="M353 257.8L386.7 272.9L408.2 240.5L383.6 230.9Z"/><path d="M408.2 240.5L447.8 245.9L452 219.6L432 217.2Z"/><path d="M315.2 327.4L358.5 353L369.6 311.6L329.5 290.9Z"/><path d="M609.8 419.4L585 404.5L522.4 428.1L536.8 448.4Z"/><path d="M447.8 245.9L490 245.2L473.2 219.3L452 219.6Z"/><path d="M630 470.2L626.5 443.7L546.3 477.8L547.8 507.3Z"/><path d="M329.5 290.9L369.6 311.6L386.7 272.9L353 257.8Z"/><path d="M504.4 280.5L548.4 269.8L521.1 238.6L490 245.2Z"/><path d="M519.2 408L579.6 387L579 347.7L519.9 366.3Z"/><path d="M626.5 443.7L609.8 419.4L536.8 448.4L546.3 477.8Z"/><path d="M424.6 538.1L423.2 532.9L316.6 503.6L330.1 512Z"/><path d="M514.8 322.2L568.4 307.4L548.4 269.8L504.4 280.5Z"/><path d="M519.9 366.3L579 347.7L568.4 307.4L514.8 322.2Z"/><path d="M528.2 533.5L540.9 527.7L423.2 532.9L424.6 538.1Z"/><path d="M431.5 431.3L433.8 424.6L365.5 409.6L348 412.7Z"/><path d="M357.9 428L432 445.7L433.2 410.4L354.6 393Z"/><path d="M522.4 428.1L507.6 422L433.8 424.6L431.5 431.3Z"/><path d="M432 445.7L513.1 443.2L519.2 408L433.2 410.4Z"/><path d="M386.7 272.9L443.3 281.7L447.8 245.9L408.2 240.5Z"/><path d="M443.3 281.7L504.4 280.5L490 245.2L447.8 245.9Z"/><path d="M423.2 532.9L423.5 512.5L311.2 482.9L316.6 503.6Z"/><path d="M354.6 393L433.2 410.4L435.6 368.4L358.5 353Z"/><path d="M428.4 452.5L431.5 431.3L348 412.7L329.7 429.3Z"/><path d="M369.6 311.6L439.1 323.9L443.3 281.7L386.7 272.9Z"/><path d="M540.9 527.7L547.8 507.3L423.5 512.5L423.2 532.9Z"/><path d="M433.2 410.4L519.2 408L519.9 366.3L435.6 368.4Z"/><path d="M358.5 353L435.6 368.4L439.1 323.9L369.6 311.6Z"/><path d="M536.8 448.4L522.4 428.1L431.5 431.3L428.4 452.5Z"/><path d="M439.1 323.9L514.8 322.2L504.4 280.5L443.3 281.7Z"/><path d="M423.5 512.5L425.4 482.6L316 455.3L311.2 482.9Z"/><path d="M435.6 368.4L519.9 366.3L514.8 322.2L439.1 323.9Z"/><path d="M425.4 482.6L428.4 452.5L329.7 429.3L316 455.3Z"/><path d="M547.8 507.3L546.3 477.8L425.4 482.6L423.5 512.5Z"/><path d="M546.3 477.8L536.8 448.4L428.4 452.5L425.4 482.6Z"/></g></svg>
<div class="vl" style="left:281px;top:42px">3D</div>
<!-- right menu -->
<div class="t" style="left:965px;top:24px">MNM v2.1c</div>
<svg style="left:955px;top:0" width="75" height="52"><path d="M6.7 41V47.8M4.1 42.3L9.3 46.5M4.1 46.5L9.3 42.3M18.7 41V47.8M16.1 42.3L21.3 46.5M16.1 46.5L21.3 42.3M30.7 41V47.8M28.1 42.3L33.3 46.5M28.1 46.5L33.3 42.3M42.7 41V47.8M40.1 42.3L45.3 46.5M40.1 46.5L45.3 42.3M54.7 41V47.8M52.1 42.3L57.3 46.5M52.1 46.5L57.3 42.3M66.7 41V47.8M64.1 42.3L69.3 46.5M64.1 46.5L69.3 42.3" stroke="#000" stroke-width="1.4" fill="none"/></svg>
<div class="t" style="left:958px;top:55px">END Point
MID Point
PREV Point

X.
Y.
Z.
XY.
XZ.
YZ.

AREA
ELEVation

ZOOMIN
ZOOMPREV
ZOOMALL
VPOINT
REDRAW

MAINMENU=&gt;</div>
<!-- bottom -->
<div class="t" style="left:5px;top:747px">INPUT:</div>
<div class="t" style="left:5px;top:777px">Command:</div>
</body></html>
